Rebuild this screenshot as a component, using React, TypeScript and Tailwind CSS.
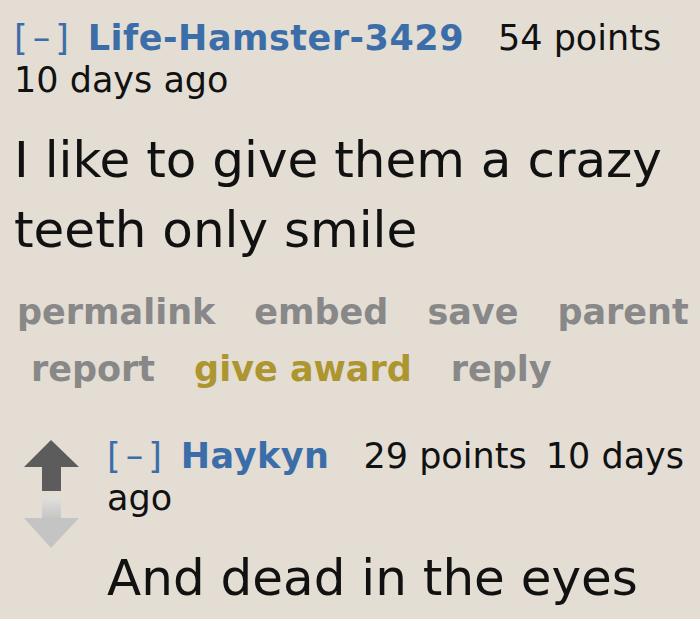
import React from 'react';

const actions = ['permalink', 'embed', 'save', 'parent', 'report', 'give award', 'reply'];

function Tagline({ author, score, time }: { author: string; score: string; time: string }) {
  return (
    <p className="text-[35px] leading-[42px] text-[#111]">
      <span className="text-[#3b6ea8] tracking-[5px] mr-[14px]">[–]</span>
      <span className="font-bold text-[#3b6ea8] tracking-[0.5px] mr-[34px]">{author}</span>
      <span className="mr-[8px]">{score}</span> {time}
    </p>
  );
}

function Arrows() {
  return (
    <svg width="56" height="112" viewBox="0 0 56 112" className="mt-[3px] shrink-0">
      <defs>
        <linearGradient id="downStem" x1="0" y1="0" x2="0" y2="1">
          <stop offset="0" stopColor="#e2e0dc" />
          <stop offset="1" stopColor="#c4c4c4" />
        </linearGradient>
      </defs>
      <polygon points="28,2 56,29 38,29 38,53 19,53 19,29 1,29" fill="#5c5c5c" />
      <rect x="19" y="59" width="19" height="22" fill="url(#downStem)" />
      <polygon points="1,80 56,80 28,110" fill="#c4c4c4" />
    </svg>
  );
}

export default function App() {
  return (
    <div
      className="w-[700px] h-[619px] overflow-hidden bg-[#e3ddd4] pl-[14px] pt-[17px]"
      style={{ fontFamily: '"DejaVu Sans", Verdana, sans-serif' }}
    >
      <Tagline author="Life-Hamster-3429" score="54 points" time="10 days ago" />

      <div className="mt-[24px] text-[50px] leading-[70px] text-[#111]">
        I like to give them a crazy teeth only smile
      </div>

      <ul className="mt-[19px] flex flex-wrap gap-x-[25px] pl-[3px] text-[35px] leading-[57px] font-bold">
        {actions.map((a, i) => (
          <li
            key={a}
            className={
              (i === 0 ? '' : 'pl-[14px] ') +
              (a === 'give award' ? 'text-[#ad9530]' : 'text-[#888888]')
            }
          >
            {a}
          </li>
        ))}
      </ul>

      <div className="mt-[37px] flex items-start">
        <div className="ml-[9px] w-[56px]">
          <Arrows />
        </div>
        <div className="ml-[28px] flex-1 min-w-0">
          <Tagline author="Haykyn" score="29 points" time="10 days ago" />
          <div className="mt-[24px] text-[50px] leading-[70px] text-[#111]">
            And dead in the eyes
          </div>
        </div>
      </div>
    </div>
  );
}
